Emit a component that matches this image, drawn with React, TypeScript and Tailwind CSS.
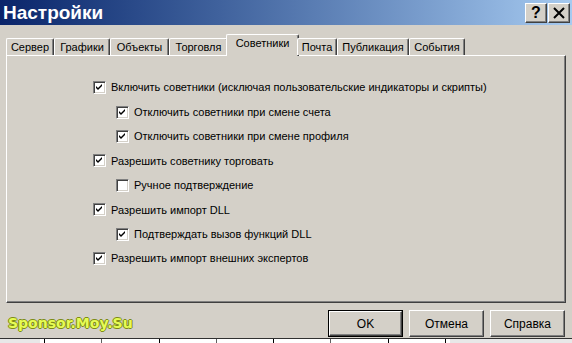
import React from 'react';

const tabs = [
  { label: 'Сервер', w: 'w-[48px]' },
  { label: 'Графики', w: 'w-[56px]' },
  { label: 'Объекты', w: 'w-[59px]' },
  { label: 'Торговля', w: 'w-[59px]' },
  { label: 'Советники', w: 'w-[73px]', active: true },
  { label: 'Почта', w: 'w-[40px]' },
  { label: 'Публикация', w: 'w-[72px]' },
  { label: 'События', w: 'w-[56px]' },
];

const options = [
  { label: 'Включить советники (исключая пользовательские индикаторы и скрипты)', level: 1, checked: true },
  { label: 'Отключить советники при смене счета', level: 2, checked: true },
  { label: 'Отключить советники при смене профиля', level: 2, checked: true },
  { label: 'Разрешить советнику торговать', level: 1, checked: true },
  { label: 'Ручное подтверждение', level: 2, checked: false },
  { label: 'Разрешить импорт DLL', level: 1, checked: true },
  { label: 'Подтверждать вызов функций DLL', level: 2, checked: true },
  { label: 'Разрешить импорт внешних экспертов', level: 1, checked: true },
];

function Checkbox({ checked }: { checked: boolean }) {
  return (
    <div className="w-[13px] h-[13px] shrink-0 bg-white border border-t-[#808080] border-l-[#808080] border-r-white border-b-white shadow-[inset_1px_1px_0_#404040,inset_-1px_-1px_0_#d4d0c8] flex items-center justify-center">
      {checked && (
        <svg width="7" height="7" viewBox="0 0 7 7">
          <polygon points="0,2 2,4 6,0 6,2 2,6 0,4" fill="#000" />
        </svg>
      )}
    </div>
  );
}

function Button({ label, isDefault }: { label: string; isDefault?: boolean }) {
  const inner = (
    <div className="h-full w-full flex items-center justify-center border border-t-white border-l-white border-r-[#404040] border-b-[#404040] shadow-[inset_-1px_-1px_0_#808080] text-[12px] text-black">
      {label}
    </div>
  );
  if (isDefault) {
    return <div className="w-[75px] h-[27px] border border-black">{inner}</div>;
  }
  return <div className="w-[75px] h-[27px]">{inner}</div>;
}

export default function App() {
  return (
    <div
      className="w-[572px] h-[343px] bg-[#d4d0c8] flex flex-col overflow-hidden"
      style={{ fontFamily: '"Liberation Sans", Arial, sans-serif' }}
    >
      {/* Title bar */}
      <div className="h-[25px] shrink-0 bg-gradient-to-r from-[#0a246a] to-[#a6caf0] flex items-center justify-between pl-[3px] pr-[2px]">
        <span className="text-white font-bold text-[19px] leading-none">Настройки</span>
        <div className="flex gap-[1px]">
          <div className="w-[22px] h-[20px] bg-[#d4d0c8] border border-t-white border-l-white border-r-[#404040] border-b-[#404040] shadow-[inset_-1px_-1px_0_#808080] flex items-center justify-center text-[16px] font-bold text-black leading-none">
            ?
          </div>
          <div className="w-[22px] h-[20px] bg-[#d4d0c8] border border-t-white border-l-white border-r-[#404040] border-b-[#404040] shadow-[inset_-1px_-1px_0_#808080] flex items-center justify-center">
            <svg width="12" height="12" viewBox="0 0 12 12">
              <path d="M1 1 L11 11 M11 1 L1 11" stroke="#000" strokeWidth="2" />
            </svg>
          </div>
        </div>
      </div>

      {/* Tabs */}
      <div className="mt-[9px] h-[21px] pl-[6px] flex items-end relative z-10 shrink-0">
        {tabs.map((t) =>
          t.active ? (
            <div
              key={t.label}
              className={`${t.w} h-[22px] -mb-px -mx-[2px] bg-[#d4d0c8] border-t border-l border-r border-t-white border-l-white border-r-[#404040] rounded-t-[2px] shadow-[inset_-1px_0_0_#808080] flex items-center justify-center pb-[4px] text-[11px] text-black`}
            >
              {t.label}
            </div>
          ) : (
            <div
              key={t.label}
              className={`${t.w} h-[17px] bg-[#d4d0c8] border-t border-l border-r border-t-white border-l-white border-r-[#404040] rounded-t-[2px] shadow-[inset_-1px_0_0_#808080] flex items-center justify-center text-[11px] text-black`}
            >
              {t.label}
            </div>
          )
        )}
      </div>

      {/* Panel */}
      <div className="mx-[6px] h-[248px] shrink-0 border border-t-white border-l-white border-r-[#404040] border-b-[#404040] shadow-[inset_-1px_-1px_0_#808080] pt-[18px] pl-[86px]">
        {options.map((o, i) => (
          <div
            key={o.label}
            className={`flex items-center gap-[5px] ${i === 0 ? 'h-[26px]' : 'h-[24.4px]'} ${o.level === 2 ? 'pl-[23px]' : ''}`}
          >
            <Checkbox checked={o.checked} />
            <span className="text-[11px] text-black whitespace-nowrap">{o.label}</span>
          </div>
        ))}
      </div>

      {/* Bottom row */}
      <div className="h-[35px] shrink-0 flex items-start pt-[7px] pl-[8px] pr-[7px]">
        <span
          className="font-bold text-[14px] text-[#e6fb55] mt-[3px] [text-shadow:1px_0_#7d8c14,-1px_0_#7d8c14,0_1px_#7d8c14,0_-1px_#7d8c14]"
          style={{ fontFamily: '"DejaVu Sans", Verdana, sans-serif' }}
        >
          Sponsor.Moy.Su
        </span>
        <div className="ml-auto flex gap-[6px]">
          <Button label="OK" isDefault />
          <Button label="Отмена" />
          <Button label="Справка" />
        </div>
      </div>

      {/* Screen behind */}
      <div className="flex-1 border-t border-[#303030] bg-[#e8e8e8] flex pl-[40px]">
        <div className="w-[410px] bg-white flex justify-between px-[4px]">
          <div className="w-px bg-black" />
          <div className="w-px bg-[#606060]" />
          <div className="w-px bg-black" />
          <div className="w-px bg-[#606060]" />
          <div className="w-px bg-black" />
          <div className="w-px bg-[#606060]" />
          <div className="w-px bg-black" />
          <div className="w-px bg-black" />
        </div>
      </div>
    </div>
  );
}
